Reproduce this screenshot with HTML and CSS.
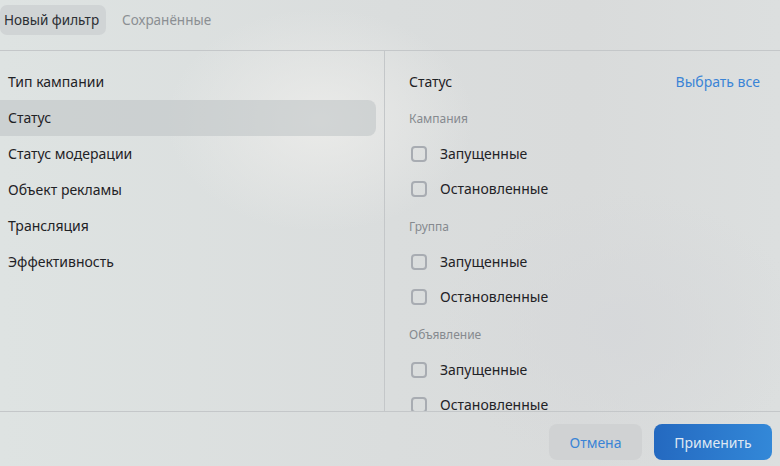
FILE: index.html
```html
<!DOCTYPE html>
<html lang="ru">
<head>
<meta charset="utf-8">
<link rel="stylesheet" href="styles.css">
</head>
<body>
<div class="page">
  <div class="tabs">
    <div class="tab active">Новый фильтр</div>
    <div class="tab">Сохранённые</div>
  </div>
  <div class="main">
    <div class="menu">
      <div class="item">Тип кампании</div>
      <div class="item selected">Статус</div>
      <div class="item">Статус модерации</div>
      <div class="item">Объект рекламы</div>
      <div class="item">Трансляция</div>
      <div class="item">Эффективность</div>
    </div>
    <div class="panel">
      <div class="panel-head">
        <div class="panel-title">Статус</div>
        <div class="select-all">Выбрать все</div>
      </div>
      <div class="group first">
        <div class="group-label">Кампания</div>
        <div class="check"><span class="box"></span>Запущенные</div>
        <div class="check"><span class="box"></span>Остановленные</div>
      </div>
      <div class="group">
        <div class="group-label">Группа</div>
        <div class="check"><span class="box"></span>Запущенные</div>
        <div class="check"><span class="box"></span>Остановленные</div>
      </div>
      <div class="group">
        <div class="group-label">Объявление</div>
        <div class="check"><span class="box"></span>Запущенные</div>
        <div class="check"><span class="box"></span>Остановленные</div>
      </div>
    </div>
  </div>
  <div class="footer">
    <button class="btn cancel">Отмена</button>
    <button class="btn apply">Применить</button>
  </div>
</div>
</body>
</html>
```

FILE: styles.css
```css
* { box-sizing: border-box; }
html, body { margin: 0; padding: 0; }
body {
  width: 780px;
  height: 466px;
  overflow: hidden;
  font-family: "Noto Sans", "Open Sans", sans-serif;
  color: #1f2226;
  background:
    radial-gradient(ellipse 220px 160px at 320px 120px, rgba(236,236,234,0.9), rgba(236,236,234,0) 70%),
    radial-gradient(ellipse 260px 200px at 620px 330px, rgba(214,216,218,0.9), rgba(214,216,218,0) 70%),
    linear-gradient(90deg, #dee3e2 0%, #dadddd 50%, #d9dbdb 75%, #dcdfdf 100%);
}
.page {
  display: flex;
  flex-direction: column;
  height: 466px;
}
.tabs {
  display: flex;
  height: 51px;
  padding-top: 5px;
  border-bottom: 1px solid #c4c7c9;
  flex: none;
}
.tab {
  height: 30px;
  line-height: 30px;
  padding: 0 7px 0 4px;
  font-size: 13.5px;
  color: #8b8f93;
  border-radius: 7px;
}
.tab.active {
  background: #d0d4d5;
  color: #2b2e33;
}
.tab + .tab { padding-left: 16px; }
.main {
  display: flex;
  height: 361px;
  flex: none;
  overflow: hidden;
  border-bottom: 1px solid #c4c7c9;
}
.menu {
  width: 385px;
  flex: none;
  border-right: 1px solid #c4c7c9;
  padding: 13px 8px 0 0;
  display: flex;
  flex-direction: column;
}
.item {
  height: 36px;
  flex: none;
  line-height: 36px;
  padding-left: 8px;
  font-size: 14px;
  color: #1f2226;
}
.item.selected {
  background: rgba(190,194,197,0.55);
  border-radius: 0 8px 8px 0;
}
.panel {
  flex: 1;
  padding: 13px 20px 0 24px;
  display: flex;
  flex-direction: column;
}
.panel-head {
  display: flex;
  justify-content: space-between;
  height: 36px;
  flex: none;
  line-height: 36px;
  font-size: 14px;
}
.select-all { color: #3a84d6; }
.group { flex: none; margin-top: 3px; }
.group.first { margin-top: 1px; }
.group-label {
  height: 35px;
  line-height: 35px;
  font-size: 12px;
  color: #868a8f;
}
.check {
  height: 35px;
  display: flex;
  align-items: center;
  font-size: 14px;
  color: #1f2226;
}
.box {
  width: 16px;
  height: 16px;
  border: 2px solid #a8acb2;
  border-radius: 4px;
  margin: 0 13px 0 2px;
  flex: none;
}
.footer {
  flex: 1;
  display: flex;
  justify-content: flex-end;
  align-items: flex-start;
  gap: 12px;
  padding: 12px 8px 0 0;
}
.btn {
  height: 36px;
  border: none;
  border-radius: 8px;
  font-family: "Noto Sans", "Open Sans", sans-serif;
  font-size: 14px;
}
.cancel {
  width: 93px;
  background: #d0d2d3;
  color: #3a84d6;
}
.apply {
  width: 118px;
  background: linear-gradient(90deg, #2469c0, #3388d8);
  color: #dfe8f3;
}
```
